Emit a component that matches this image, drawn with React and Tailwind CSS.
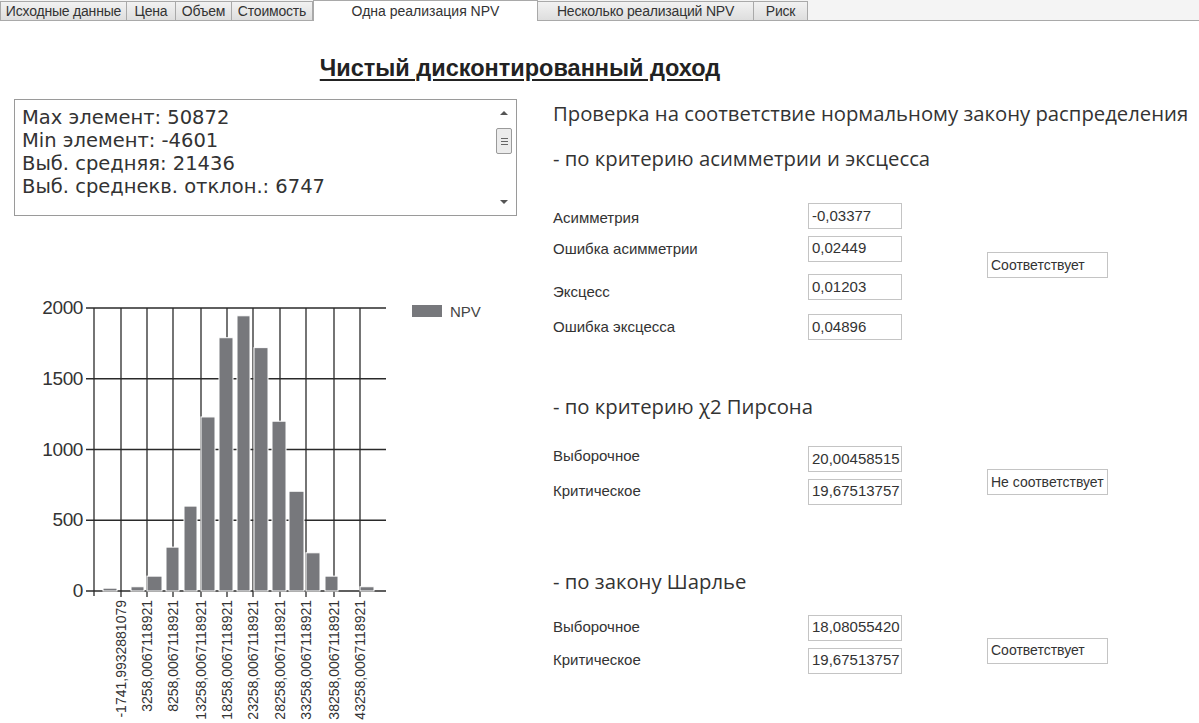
import React from "react";

/* TABS */
const tabs = [
  { label: "Исходные данные", w: 127 },
  { label: "Цена", w: 49 },
  { label: "Объем", w: 56 },
  { label: "Стоимость", w: 81 },
  { label: "Одна реализация NPV", w: 225, active: true },
  { label: "Несколько реализаций NPV", w: 216 },
  { label: "Риск", w: 54 },
];

/* HISTOGRAM DATA */
const bars = [
  { x: 103, w: 14, v: 20 },
  { x: 131, w: 13, v: 30 },
  { x: 147, w: 15, v: 105 },
  { x: 166, w: 13, v: 310 },
  { x: 184, w: 13, v: 600 },
  { x: 201, w: 14, v: 1230 },
  { x: 219, w: 14, v: 1790 },
  { x: 237, w: 13, v: 1945 },
  { x: 254, w: 14, v: 1720 },
  { x: 272, w: 14, v: 1200 },
  { x: 289, w: 15, v: 705 },
  { x: 306, w: 14, v: 270 },
  { x: 325, w: 13, v: 105 },
  { x: 360, w: 14, v: 30 },
];

const gridX = [121, 147, 173, 201, 227, 253, 280, 306, 334, 360];
const xLabels = [
  "-1741,9932881079",
  "3258,0067118921",
  "8258,0067118921",
  "13258,0067118921",
  "18258,0067118921",
  "23258,0067118921",
  "28258,0067118921",
  "33258,0067118921",
  "38258,0067118921",
  "43258,0067118921",
];
const yTicks = [0, 500, 1000, 1500, 2000];

const Y0 = 302;
const K = 283 / 2000;

const Chart = () => (
  <svg width="500" height="433" className="block" style={{ fontFamily: '"Liberation Sans", Arial, sans-serif' }}>
    {/* grid */}
    {yTicks.map((t) => (
      <line key={t} x1="86" x2="386" y1={Y0 - t * K} y2={Y0 - t * K} stroke="#2a2a2a" strokeWidth="1.3" />
    ))}
    <line x1="94" x2="94" y1={Y0 - 2000 * K} y2={Y0 + 5} stroke="#2a2a2a" strokeWidth="1.3" />
    {gridX.map((x) => (
      <line key={x} x1={x} x2={x} y1={Y0 - 2000 * K} y2={Y0 + 6} stroke="#2a2a2a" strokeWidth="1.3" />
    ))}

    {/* bars */}
    {bars.map((b, i) => (
      <rect key={i} x={b.x} y={Y0 - b.v * K} width={b.w} height={b.v * K} fill="#77787c" stroke="#fff" strokeWidth="1" />
    ))}

    {/* y labels */}
    {yTicks.map((t) => (
      <text key={t} x="83" y={Y0 - t * K + 6} textAnchor="end" fontSize="19" fill="#333" letterSpacing="-0.4">
        {t}
      </text>
    ))}

    {/* x labels */}
    {gridX.map((x, i) => (
      <text
        key={x}
        x={x + 5}
        y={311}
        transform={`rotate(-90 ${x + 5} 311)`}
        textAnchor="end"
        fontSize="14"
        fill="#333"
      >
        {xLabels[i]}
      </text>
    ))}

    {/* legend */}
    <rect x="412" y="16" width="30" height="12" fill="#77787c" />
    <text x="450" y="28" fontSize="15" fill="#444">
      NPV
    </text>
  </svg>
);

const Field = ({ value }) => (
  <div className="w-[94px] h-[26px] border border-[#c4c4c4] bg-white px-[3px] flex items-center text-[15px] text-[#333]">
    {value}
  </div>
);

const Result = ({ text, top }) => (
  <div
    className={`w-[121px] h-[26px] border border-[#c4c4c4] bg-white px-[3px] flex items-center text-[14px] text-[#333] ml-[85px] ${top}`}
  >
    {text}
  </div>
);

const Row = ({ label, value, mt, dy }) => (
  <div className={`flex items-center ${mt}`}>
    <div className={`w-[255px] text-[15px] text-[#333] ${dy}`}>{label}</div>
    <Field value={value} />
  </div>
);

const Heading = ({ children, mt }) => (
  <div className={`h-[24px] leading-[24px] text-[20.3px] text-[#333] ${mt}`} style={{ fontFamily: '"Open Sans", sans-serif' }}>
    {children}
  </div>
);

export default function App() {
  return (
    <div className="w-[1199px] h-[723px] overflow-hidden bg-white" style={{ fontFamily: '"Liberation Sans", Arial, sans-serif' }}>
      {/* TAB STRIP */}
      <div className="h-[21px] flex items-end border-b border-[#a9a9a9] bg-[#f4f4f4]">
        {tabs.map((t) =>
          t.active ? (
            <div
              key={t.label}
              style={{ width: t.w }}
              className="h-[21px] -mb-px bg-white border-x border-t border-[#a9a9a9] flex items-center justify-center text-[14px] text-[#333]"
            >
              {t.label}
            </div>
          ) : (
            <div
              key={t.label}
              style={{ width: t.w }}
              className="h-[19px] bg-gradient-to-b from-[#f2f2f2] to-[#dedede] border-r border-t border-[#a9a9a9] first:border-l flex items-center justify-center text-[14px] text-[#333] tracking-[-0.2px]"
            >
              {t.label}
            </div>
          )
        )}
      </div>

      {/* TITLE */}
      <div className="w-[1040px] mt-[33px] h-[29px] text-center">
        <span className="text-[23.5px] leading-[29px] font-bold text-[#222] underline underline-offset-[3px] decoration-[2px]">
          Чистый дисконтированный доход
        </span>
      </div>

      <div className="flex">
        {/* LEFT COLUMN */}
        <div className="w-[553px] shrink-0">
          <div className="ml-[14px] mt-[16px] w-[503px] h-[117px] border border-[#9a9a9a] flex">
            <div
              className="flex-1 pl-[7px] pt-[6px] text-[19.5px] leading-[23px] text-[#333]"
              style={{ fontFamily: '"DejaVu Sans", sans-serif' }}
            >
              <div>Max элемент: 50872</div>
              <div>Min элемент: -4601</div>
              <div>Выб. средняя: 21436</div>
              <div>Выб. среднекв. отклон.: 6747</div>
            </div>
            {/* scrollbar */}
            <div className="w-[20px] mr-[2px] flex flex-col items-center py-[4px]">
              <div className="h-[18px] flex items-center justify-center">
                <div className="w-0 h-0 border-x-[4px] border-x-transparent border-b-[4px] border-b-[#555]" />
              </div>
              <div className="w-[16px] h-[26px] mt-[6px] border border-[#9a9a9a] rounded-[2px] bg-[#ececec] flex flex-col items-center justify-center gap-[2px]">
                <div className="w-[7px] h-px bg-[#666]" />
                <div className="w-[7px] h-px bg-[#666]" />
                <div className="w-[7px] h-px bg-[#666]" />
              </div>
              <div className="flex-1" />
              <div className="h-[18px] flex items-center justify-center">
                <div className="w-0 h-0 border-x-[4px] border-x-transparent border-t-[4px] border-t-[#555]" />
              </div>
            </div>
          </div>
          <div className="mt-[73px]">
            <Chart />
          </div>
        </div>

        {/* RIGHT COLUMN */}
        <div className="flex-1">
          <Heading mt="mt-[18px]">Проверка на соответствие нормальному закону распределения</Heading>
          <Heading mt="mt-[21px]">- по критерию асимметрии и эксцесса</Heading>

          <div className="flex mt-[33px]">
            <div>
              <Row label="Асимметрия" value="-0,03377" mt="" dy="pt-[4px]" />
              <Row label="Ошибка асимметрии" value="0,02449" mt="mt-[6px]" dy="pt-[2px]" />
              <Row label="Эксцесс" value="0,01203" mt="mt-[9px]" dy="pt-[10px]" />
              <Row label="Ошибка эксцесса" value="0,04896" mt="mt-[11px]" dy="" />
            </div>
            <Result text="Соответствует" top="mt-[49px]" />
          </div>

          <Heading mt="mt-[54px]">- по критерию χ2 Пирсона</Heading>
          <div className="flex mt-[27px]">
            <div>
              <Row label="Выборочное" value="20,00458515" mt="" dy="pb-[6px]" />
              <Row label="Критическое" value="19,67513757" mt="mt-[5px]" dy="" />
            </div>
            <Result text="Не соответствует" top="mt-[24px]" />
          </div>

          <Heading mt="mt-[64px]">- по закону Шарлье</Heading>
          <div className="flex mt-[22px]">
            <div>
              <Row label="Выборочное" value="18,08055420" mt="" dy="" />
              <Row label="Критическое" value="19,67513757" mt="mt-[7px]" dy="" />
            </div>
            <Result text="Соответствует" top="mt-[23px]" />
          </div>
        </div>
      </div>
    </div>
  );
}
